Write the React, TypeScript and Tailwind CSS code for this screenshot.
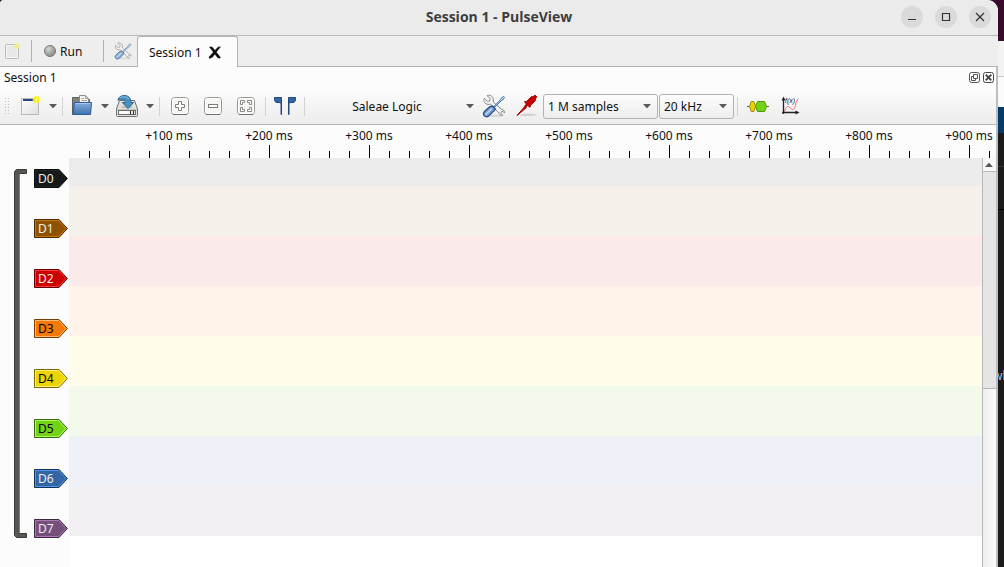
import type { ReactNode } from "react";

type Channel = {
  name: string;
  fill: string;
  light: string;
  dark: string;
  text: string;
  band: string;
};

const channels: Channel[] = [
  { name: "D0", fill: "#16191a", light: "#1f2425", dark: "#0a0c0c", text: "text-[#eeeeec]", band: "bg-[#ececec]" },
  { name: "D1", fill: "#8f5202", light: "#cd7703", dark: "#472901", text: "text-[#eeeeec]", band: "bg-[#f5f0ea]" },
  { name: "D2", fill: "#cc0000", light: "#ff3b3b", dark: "#660000", text: "text-[#eeeeec]", band: "bg-[#fbeaea]" },
  { name: "D3", fill: "#f57900", light: "#ffb870", dark: "#7a3c00", text: "text-black", band: "bg-[#fff3ea]" },
  { name: "D4", fill: "#edd400", light: "#fff27a", dark: "#766a00", text: "text-black", band: "bg-[#fffdea]" },
  { name: "D5", fill: "#73d216", light: "#a8ff5c", dark: "#39690b", text: "text-black", band: "bg-[#f3faeb]" },
  { name: "D6", fill: "#3465a4", light: "#4d95f2", dark: "#1a3252", text: "text-[#eeeeec]", band: "bg-[#eef1f7]" },
  { name: "D7", fill: "#75507b", light: "#ad76b5", dark: "#3a283d", text: "text-[#eeeeec]", band: "bg-[#f2f0f3]" },
];

const marks = [100, 200, 300, 400, 500, 600, 700, 800, 900];

function Separator() {
  return (
    <div className="flex w-[7px] shrink-0 justify-center">
      <div className="h-[19px] w-px bg-[#d2d2d2]" />
    </div>
  );
}

function Arrow() {
  return (
    <svg width="8" height="4" viewBox="0 0 8 4" aria-hidden="true">
      <path d="M0 0H8L4 4.4Z" fill="#595959" />
    </svg>
  );
}

function Tool({ label, width = "w-8", children }: { label: string; width?: string; children: ReactNode }) {
  return (
    <button type="button" aria-label={label} className={`flex h-7 shrink-0 items-center justify-center ${width}`}>
      {children}
    </button>
  );
}

function MenuArrow({ label }: { label: string }) {
  return (
    <Tool label={label} width="w-[13px]">
      <Arrow />
    </Tool>
  );
}

function ToolsIcon({ size }: { size: number }) {
  return (
    <svg width={size} height={size} viewBox="0 0 24 24" aria-hidden="true">
      <ellipse cx="13" cy="21.8" rx="9" ry="1.2" fill="#000" opacity="0.1" />
      <path
        d="M5 1.6 8.3 4.6 7.8 6.8 5.4 7.4 2.2 4.4C1.2 7.2 2.8 10.2 6 10.4C7 10.5 7.8 10.3 8.4 10L17 19.2C17.6 20.8 19 21.8 20.6 21.2L18.7 19.2 19.4 17.7 21 17.4 22.5 19C22.9 17 21.4 15.2 19.3 15.3L11.2 8C12 5 10.8 2.2 8.2 1.4C7 1 5.9 1.1 5 1.6Z"
        fill="#f4f4f2"
        stroke="#888a85"
        strokeWidth="1"
      />
      <path d="M12 12.4 18.4 5.8 19 4.4 21.6 2.4 22.6 3.4 20.7 6 19.3 6.6 13 13Z" fill="#d7e4f5" stroke="#3f6da8" strokeWidth="1" />
      <path
        d="M10.4 12 13.4 15 12.4 16.4 7.4 21.4C5.8 23 3.6 23 2.4 21.9C1.2 20.6 1.3 18.6 2.9 17L8 12.6Z"
        fill="#7a9fcf"
        stroke="#1f4a87"
        strokeWidth="1.2"
      />
      <path d="M4 20.2 9.4 14.9" stroke="#c4d8f0" strokeWidth="1.4" strokeLinecap="round" />
    </svg>
  );
}

function NewSessionIcon() {
  return (
    <svg width="24" height="24" viewBox="0 0 24 24" aria-hidden="true">
      <defs>
        <linearGradient id="paper" x1="0" y1="0" x2="1" y2="1">
          <stop offset="0" stopColor="#ffffff" />
          <stop offset="1" stopColor="#dededc" />
        </linearGradient>
        <radialGradient id="glow">
          <stop offset="0" stopColor="#fffbd0" />
          <stop offset="0.35" stopColor="#fff200" />
          <stop offset="0.7" stopColor="#fff13a" stopOpacity="0.75" />
          <stop offset="1" stopColor="#fff13a" stopOpacity="0" />
        </radialGradient>
      </defs>
      <rect x="3.5" y="4.5" width="17" height="16" fill="url(#paper)" stroke="#b9b9b7" />
      <rect x="5" y="5" width="14" height="2" fill="#204a87" />
      <circle cx="18.5" cy="5.5" r="4.6" fill="url(#glow)" />
    </svg>
  );
}

function OpenIcon() {
  return (
    <svg width="24" height="24" viewBox="0 0 24 24" aria-hidden="true">
      <defs>
        <linearGradient id="folder" x1="0" y1="0" x2="0" y2="1">
          <stop offset="0" stopColor="#86aede" />
          <stop offset="1" stopColor="#3c72b2" />
        </linearGradient>
      </defs>
      <path d="M2.5 20.5V3.5H9L10 5.5H19.5V20.5Z" fill="#81827e" stroke="#5d5f5b" />
      <path d="M9.5 14V1.5H15.5L18.5 4.5V14Z" fill="#f4f4f2" stroke="#8b8c89" />
      <path d="M15.5 1.5V4.5H18.5M11.5 4.5H14M11.5 6.5H17" stroke="#a3a4a0" fill="none" />
      <path d="M3 20.5 4.5 8.5H21.5L20.5 20.5Z" fill="url(#folder)" stroke="#2d5c9b" strokeLinejoin="round" />
      <path d="M5.4 9.5H20.4" stroke="#aac8eb" />
    </svg>
  );
}

function SaveIcon() {
  return (
    <svg width="24" height="24" viewBox="0 0 24 24" aria-hidden="true">
      <path d="M4.5 6.5H19.5L22.5 15V21.5Q22.5 22.5 21.5 22.5H2.5Q1.5 22.5 1.5 21.5V15Z" fill="#e3e3e1" stroke="#6c6e6a" />
      <path d="M1.8 15.5H22.2" stroke="#bfc0bd" />
      <rect x="3.5" y="16.5" width="17" height="4" fill="#fafafa" stroke="#6c6e6a" />
      <path d="M15.5 17V20.5M18.5 17V20.5" stroke="#333" strokeWidth="1.2" />
      <path d="M6 12.5H18L17 14H7Z" fill="#b9bab7" />
      <path
        d="M2.8 6.2C3.5 3 6.5 1.3 9.8 1.5C14 1.8 16 4.5 16 8.5H18.6L13 14.6 7.3 8.5H10.3C10.3 6.5 9.4 5.2 7 5.2C5.3 5.1 4 5.5 2.8 6.2Z"
        fill="#4b90c1"
        stroke="#25658f"
        strokeLinejoin="round"
      />
      <path d="M5 3.9C7.5 2 12 2.3 13.7 5" stroke="#8fc0e0" fill="none" />
    </svg>
  );
}

function ZoomIcon({ kind }: { kind: "in" | "out" | "fit" }) {
  return (
    <svg width="20" height="20" viewBox="0 0 20 20" aria-hidden="true">
      <rect x="1.5" y="1.5" width="17" height="17" rx="3" fill="#f5f5f4" stroke="#979894" />
      <path d="M3 18.5H17" stroke="#6d6f6b" />
      <rect x="2.5" y="2.5" width="15" height="15" rx="2" fill="none" stroke="#fff" />
      {kind === "in" && (
        <path d="M8.5 5.5H11.5V8.5H14.5V11.5H11.5V14.5H8.5V11.5H5.5V8.5H8.5Z" fill="#fff" stroke="#7b7d79" />
      )}
      {kind === "out" && <rect x="5.5" y="8.5" width="9" height="3" fill="#fff" stroke="#7b7d79" />}
      {kind === "fit" && (
        <path
          d="M4.5 4.5H8.5V6.5H6.5V8.5H4.5ZM11.5 4.5H15.5V8.5H13.5V6.5H11.5ZM4.5 11.5H6.5V13.5H8.5V15.5H4.5ZM13.5 11.5H15.5V15.5H11.5V13.5H13.5Z"
          fill="#fff"
          stroke="#868884"
        />
      )}
    </svg>
  );
}

function CursorsIcon() {
  return (
    <svg width="24" height="24" viewBox="0 0 24 24" aria-hidden="true">
      <path
        d="M1.5 3.5H8.5V20.5H8V9L6 8.5H3L1.5 6.5ZM22.5 3.5H15.5V20.5H16V9L18 8.5H21L22.5 6.5Z"
        fill="#3465a4"
        stroke="#204a87"
      />
    </svg>
  );
}

function ProbeIcon() {
  return (
    <svg width="24" height="24" viewBox="0 0 24 24" aria-hidden="true">
      <ellipse cx="13" cy="20.8" rx="9" ry="1.3" fill="#000" opacity="0.12" />
      <path d="M2 21.5 10 12.2 11.4 13.6Z" fill="#cc0000" stroke="#a40000" />
      <path d="M10 12.8 12.4 10.2" stroke="#a40000" strokeWidth="2.4" />
      <path
        d="M9.6 7.6 11.6 7.4 16.6 2.6 18 2.8 20 1.2 21.8 2.8 20.2 5 20.4 6.4 15.6 11.4 15 13.2 13.6 12.4 11 9.8Z"
        fill="#cc0000"
        stroke="#a40000"
      />
    </svg>
  );
}

function DecoderIcon() {
  return (
    <svg width="24" height="24" viewBox="0 0 24 24" aria-hidden="true">
      <path d="M1 12.5H23" stroke="#4e7d13" />
      <path d="M3.5 12.5 5.2 7.5H7.8L9.5 12.5 7.8 17.5H5.2Z" fill="#edd400" stroke="#a08a00" />
      <path d="M9.5 12.5 11.5 7.5H18.5L20.5 12.5 18.5 17.5H11.5Z" fill="#73d216" stroke="#4e9a06" />
    </svg>
  );
}

function MathIcon() {
  return (
    <svg width="24" height="24" viewBox="0 0 24 24" aria-hidden="true">
      <path d="M5.5 17.5C7 12 9.5 11.5 11.5 14C13.5 16.5 15.5 16 16.5 11C17 8 18 5.5 19.5 4.5" fill="none" stroke="#f56e6e" />
      <path d="M4.5 20V5M3 18.5H18" fill="none" stroke="#222" strokeWidth="1.3" />
      <path d="M4.5 2.5 2.5 6.5H6.5ZM20.5 18.5 16.5 16.5V20.5Z" fill="#222" />
      <text x="6" y="9" fontSize="7" fontStyle="italic" fontFamily="Liberation Sans, sans-serif" fill="#222">
        f(x)
      </text>
    </svg>
  );
}

function WindowButton({ label, children }: { label: string; children: ReactNode }) {
  return (
    <button type="button" aria-label={label} className="flex size-[22px] items-center justify-center rounded-full bg-[#dadada]">
      <svg width="12" height="12" viewBox="0 0 12 12" fill="none" stroke="#333" aria-hidden="true">
        {children}
      </svg>
    </button>
  );
}

function TitleBar() {
  return (
    <header className="grid h-9 grid-cols-[1fr_auto_1fr] items-center border-b border-[#b8b8b8] bg-[#ebebeb] pr-[7px] pl-[7px]">
      <div />
      <h1 className="pb-[2px] font-['Open_Sans','Noto_Sans',sans-serif] text-[14px] leading-5 font-bold text-[#3d3d3d]">
        Session 1 - PulseView
      </h1>
      <div className="flex justify-end gap-3 pb-[2px]">
        <WindowButton label="Minimize">
          <path d="M2 8.5H10" />
        </WindowButton>
        <WindowButton label="Maximize">
          <path d="M2.5 2.5H9.5V9.5H2.5Z" strokeWidth="1.2" />
        </WindowButton>
        <WindowButton label="Close">
          <path d="M2 2 10 10M10 2 2 10" strokeWidth="1.2" />
        </WindowButton>
      </div>
    </header>
  );
}

function TabBar() {
  return (
    <div className="flex h-[31px] bg-[#eeeeee]">
      <div className="flex items-center border-b border-[#b4b4b4]">
        <button type="button" aria-label="New session" className="flex w-[31px] items-center pl-1">
          <svg width="17" height="18" viewBox="0 0 17 18" aria-hidden="true">
            <rect x="1.5" y="2.5" width="13" height="14" rx="1" fill="#e8e8e6" stroke="#b9b9b7" />
            <rect x="2.5" y="3.5" width="11" height="12" fill="none" stroke="#f6f6f4" />
            <circle cx="13" cy="4" r="2.8" fill="#f3ea8e" />
          </svg>
        </button>
        <div className="h-[22px] w-px bg-[#b0b0b0]" />
        <button type="button" className="flex w-[71px] items-center gap-1 pl-3">
          <svg width="12" height="12" viewBox="0 0 12 12" aria-hidden="true">
            <defs>
              <radialGradient id="led" cx="0.35" cy="0.3" r="0.75">
                <stop offset="0" stopColor="#d3d7cf" />
                <stop offset="1" stopColor="#858782" />
              </radialGradient>
            </defs>
            <circle cx="6" cy="6" r="5.5" fill="url(#led)" stroke="#777974" />
          </svg>
          Run
        </button>
        <div className="h-[22px] w-px bg-[#b0b0b0]" />
        <button type="button" aria-label="Settings" className="flex w-[33px] items-center justify-center pl-[5px] opacity-80">
          <ToolsIcon size={18} />
        </button>
      </div>
      <div className="flex w-[101px] items-center justify-between rounded-t-[3px] border border-b-0 border-[#b4b4b4] bg-[#fcfcfc] pr-[15px] pl-[11px]">
        <button type="button" className="whitespace-nowrap">Session 1</button>
        <button type="button" aria-label="Close session">
          <svg width="14" height="13" viewBox="0 0 14 13" aria-hidden="true">
            <path d="M1 0.8H4.2L12.8 11.6 11.8 12.4 9.4 11.8Z" fill="#111" />
            <path d="M12.4 0.8 4.4 11.2 1.6 12.4 1 11 10 1.2Z" fill="#111" stroke="#111" strokeWidth="0.6" />
          </svg>
        </button>
      </div>
      <div className="flex-1 border-b border-[#b4b4b4]" />
    </div>
  );
}

function DockTitle() {
  return (
    <div className="flex h-[21px] items-center justify-between bg-[#fcfcfc] pr-[2px] pl-1">
      <h2>Session 1</h2>
      <div className="flex gap-[3px]">
        <button type="button" aria-label="Float panel">
          <svg width="11" height="11" viewBox="0 0 11 11" fill="none" stroke="#555" aria-hidden="true">
            <rect x="0.5" y="0.5" width="10" height="10" rx="2" />
            <path d="M4.5 2.5H8.5V6.5H4.5ZM4.5 4.5H2.5V8.5H6.5V6.5" />
          </svg>
        </button>
        <button type="button" aria-label="Close panel">
          <svg width="11" height="11" viewBox="0 0 11 11" fill="none" stroke="#444" aria-hidden="true">
            <rect x="0.5" y="0.5" width="10" height="10" rx="2" />
            <path d="M2.7 2.7 8.3 8.3M8.3 2.7 2.7 8.3" strokeWidth="1.9" />
          </svg>
        </button>
      </div>
    </div>
  );
}

function Picker({ label, value, width }: { label: string; value: string; width: string }) {
  return (
    <div className={`grid shrink-0 items-center ${width}`}>
      <select
        aria-label={label}
        className="col-start-1 row-start-1 h-[25px] w-full appearance-none rounded-[3px] border border-[#b2b2b2] bg-linear-to-b from-[#fdfdfd] to-[#ededed] pl-1"
      >
        <option>{value}</option>
      </select>
      <span className="pointer-events-none col-start-1 row-start-1 justify-self-end pr-[7px]">
        <Arrow />
      </span>
    </div>
  );
}

function ToolBar() {
  return (
    <div className="flex h-[37px] items-center border-b border-[#b4b4b4] bg-linear-to-b from-[#fcfcfc] to-[#ececec]">
      <svg className="mr-1 ml-1 shrink-0" width="6" height="18" viewBox="0 0 6 18" aria-hidden="true">
        <path d="M1.5 1V18M4.5 1V18" stroke="#bbb" strokeDasharray="1 2" />
      </svg>
      <Tool label="New session view">
        <NewSessionIcon />
      </Tool>
      <MenuArrow label="New view menu" />
      <Separator />
      <Tool label="Open">
        <OpenIcon />
      </Tool>
      <MenuArrow label="Open menu" />
      <Tool label="Save">
        <SaveIcon />
      </Tool>
      <MenuArrow label="Save menu" />
      <Separator />
      <div className="flex">
        <Tool label="Zoom in" width="w-[33px]">
          <ZoomIcon kind="in" />
        </Tool>
        <Tool label="Zoom out" width="w-[33px]">
          <ZoomIcon kind="out" />
        </Tool>
        <Tool label="Zoom to fit" width="w-[33px]">
          <ZoomIcon kind="fit" />
        </Tool>
      </div>
      <Separator />
      <Tool label="Show cursors">
        <CursorsIcon />
      </Tool>
      <Separator />
      <button type="button" className="flex h-7 w-[170px] shrink-0 items-center pr-1">
        <span className="flex-1 text-center">Saleae Logic</span>
        <Arrow />
      </button>
      <Tool label="Configure device">
        <ToolsIcon size={24} />
      </Tool>
      <Tool label="Configure channels" width="w-[33px]">
        <ProbeIcon />
      </Tool>
      <div className="flex gap-px">
        <Picker label="Sample count" value="1 M samples" width="w-[115px]" />
        <Picker label="Sample rate" value="20 kHz" width="w-[75px]" />
      </div>
      <Separator />
      <Tool label="Add protocol decoder" width="w-[33px]">
        <DecoderIcon />
      </Tool>
      <Tool label="Add math signal" width="w-[33px]">
        <MathIcon />
      </Tool>
    </div>
  );
}

function Ruler() {
  return (
    <div className="flex h-[33px] items-end overflow-hidden bg-[#fcfcfc] pl-[89px]">
      <div className="h-[7px] w-5 shrink-0 border-l border-black" />
      <div className="h-[7px] w-[10px] shrink-0 border-l border-black" />
      {marks.map((ms) => (
        <div key={ms} className="flex h-[33px] w-[100px] shrink-0 flex-col justify-between">
          <span className="pt-[2px] text-center leading-[17px]">+{ms} ms</span>
          <div className="flex items-end pl-[10px]">
            <div className="h-[7px] w-5 border-l border-black" />
            <div className="h-[7px] w-5 border-l border-black" />
            <div className="h-[13px] w-5 border-l border-black" />
            <div className="h-[7px] w-5 border-l border-black" />
            <div className="h-[7px] w-[10px] border-l border-black" />
          </div>
        </div>
      ))}
    </div>
  );
}

function ChannelTag({ channel }: { channel: Channel }) {
  return (
    <button type="button" className={`grid h-[19px] w-[34px] items-center ${channel.text}`}>
      <svg className="col-start-1 row-start-1" width="34" height="19" viewBox="0 0 34 19" aria-hidden="true">
        <path d="M0.5 0.5H25L33.4 9.5 25 18.5H0.5Z" fill={channel.fill} stroke={channel.dark} />
        <path d="M1.5 1.5H24.5L32 9.5 24.5 17.5H1.5Z" fill="none" stroke={channel.light} />
      </svg>
      <span className="col-start-1 row-start-1 pl-1 text-left leading-[19px]">{channel.name}</span>
    </button>
  );
}

function Traces() {
  return (
    <div className="flex flex-1">
      <div className="flex w-[69px] shrink-0 items-start bg-[#fcfcfc] pt-[11px] pl-[14px]">
        <svg className="mr-[7px] shrink-0" width="13" height="369" viewBox="0 0 13 369" aria-hidden="true">
          <path d="M0.5 2.5 2.5 0.5H12.5V4.5H5.5V364.5H12.5V368.5H2.5L0.5 366.5Z" fill="#555753" stroke="#3a3c39" />
          <path d="M5.5 5V364" stroke="#7d7f7b" />
        </svg>
        <div className="flex flex-col gap-[31px]">
          {channels.map((channel) => (
            <ChannelTag key={channel.name} channel={channel} />
          ))}
        </div>
      </div>
      <div className="flex-1 bg-white">
        {channels.map((channel) => (
          <div key={channel.name} className={`h-[50px] first:h-7 ${channel.band}`} />
        ))}
      </div>
      <div className="flex w-[14px] shrink-0 flex-col border-l border-[#b8b8b8] bg-linear-to-r from-[#ededed] to-[#fcfcfc]">
        <button type="button" aria-label="Scroll up" className="flex h-[14px] items-center justify-center border-b border-[#b8b8b8] bg-[#f8f8f8] pr-px">
          <svg width="8" height="4" viewBox="0 0 8 4" aria-hidden="true">
            <path d="M0 4H8L4 -0.4Z" fill="#595959" />
          </svg>
        </button>
        <div className="h-[217px] border-b border-[#b8b8b8] bg-[#e5e5e5]" />
      </div>
    </div>
  );
}

function Desktop() {
  return (
    <div aria-hidden="true" className="col-start-1 row-start-1 flex w-5 flex-col justify-self-end overflow-hidden bg-[#1b1b1b]">
      <div className="h-[41px] bg-[#360c29]" />
      <div className="h-9 border-b border-[#c8c8c8] bg-[#f3f3f3]" />
      <div className="h-[30px] bg-[#fafafa]" />
      <div className="h-[26px] bg-[#063b66]" />
      <div className="h-[34px] border-b border-[#333]" />
      <div className="h-[43px] border-b border-black" />
      <div className="pt-[157px] pl-[9px] leading-[18px] text-[#a9c4dc]">wl</div>
    </div>
  );
}

export default function App() {
  return (
    <div className="grid min-h-screen bg-[#300a24] font-['Noto_Sans',sans-serif] text-[12px] leading-[17px] text-[#111]">
      <Desktop />
      <main className="col-start-1 row-start-1 mr-[6px] flex min-w-0 flex-col overflow-hidden rounded-tl-[4px] rounded-tr-[11px] bg-[#fcfcfc]">
        <TitleBar />
        <TabBar />
        <div className="flex flex-1 flex-col border-r-2 border-[#bdbdbd]">
          <DockTitle />
          <ToolBar />
          <Ruler />
          <Traces />
        </div>
      </main>
    </div>
  );
}
